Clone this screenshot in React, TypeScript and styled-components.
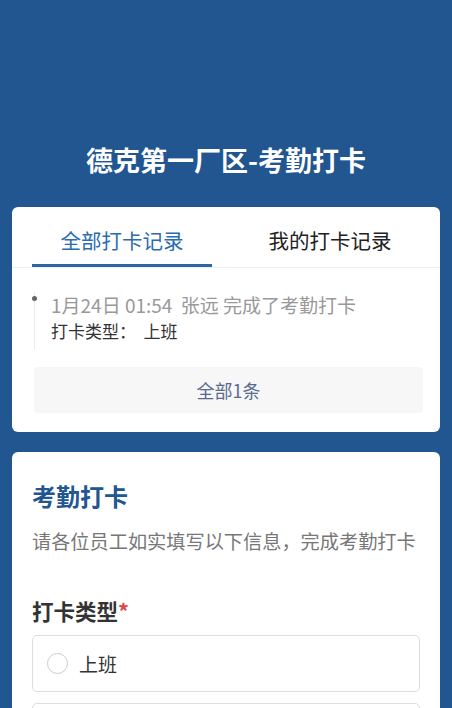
import { FC } from 'react';
import styled, { createGlobalStyle } from 'styled-components';

const GlobalStyle = createGlobalStyle`
  body {
    margin: 0;
    background: #215690;
    font-family: "Noto Sans CJK SC", "Noto Sans", sans-serif;
  }
`;

const Page = styled.div`
  min-height: 708px;
  padding: 0 12px 20px;
  box-sizing: border-box;
`;

const Title = styled.h1`
  margin: 0;
  padding-top: 138px;
  height: 207px;
  box-sizing: border-box;
  text-align: center;
  color: #fff;
  font-size: 27px;
  font-weight: 700;
  line-height: 44px;
`;

const Card = styled.div`
  background: #fff;
  border-radius: 6px;
  margin-bottom: 20px;
  overflow: hidden;
`;

const Tabs = styled.div`
  display: flex;
  justify-content: space-between;
  height: 60px;
  border-bottom: 1px solid #eee;
  padding: 0 20px;
`;

const Tab = styled.div<{ $active?: boolean }>`
  width: 180px;
  display: flex;
  align-items: center;
  justify-content: center;
  font-size: 20.5px;
  padding-top: 8px;
  box-sizing: border-box;
  color: ${({ $active }) => ($active ? '#2b6cb0' : '#222')};
  border-bottom: 3px solid ${({ $active }) => ($active ? '#2c67a4' : 'transparent')};
`;

const RecordList = styled.div`
  padding: 24px 17px 19px 22px;
`;

const Record = styled.div`
  position: relative;
  padding-left: 16px;
  border-left: 1px solid #eaeaea;
  padding-bottom: 6px;

  &::before {
    content: '';
    position: absolute;
    left: -3px;
    top: 4px;
    width: 5px;
    height: 5px;
    border-radius: 50%;
    background: #666;
  }
`;

const RecordHead = styled.div`
  color: #999;
  font-size: 19px;
  line-height: 26px;
`;

const RecordBody = styled.div`
  color: #333;
  font-size: 17px;
  line-height: 26px;
  white-space: pre;
`;

const MoreButton = styled.div`
  margin-top: 17px;
  height: 46px;
  background: #f7f7f8;
  border-radius: 4px;
  display: flex;
  align-items: center;
  justify-content: center;
  color: #5a6a8e;
  font-size: 18px;
`;

const FormBody = styled.div`
  padding: 29px 20px 20px;
`;

const FormTitle = styled.h2`
  margin: 0;
  color: #215690;
  font-size: 24px;
  font-weight: 700;
  line-height: 30px;
`;

const FormDesc = styled.p`
  margin: 16px 0 0;
  color: #777;
  font-size: 19.2px;
  line-height: 28px;
  white-space: nowrap;
`;

const FieldLabel = styled.div`
  margin-top: 42px;
  color: #333;
  font-size: 21.5px;
  font-weight: 700;
  line-height: 28px;
`;

const Star = styled.span`
  color: #e04646;
`;

const Option = styled.label`
  margin-top: 10px;
  display: flex;
  align-items: center;
  gap: 11px;
  height: 57px;
  padding: 0 14px;
  border: 1px solid #ddd;
  border-radius: 5px;
  box-sizing: border-box;
  font-size: 19px;
  color: #333;

  & + & {
    margin-top: 11px;
  }
`;

const Radio = styled.span`
  width: 21px;
  height: 21px;
  border: 1px solid #ccc;
  border-radius: 50%;
  box-sizing: border-box;
`;

const App: FC = () => (
  <Page>
    <GlobalStyle />
    <Title>德克第一厂区-考勤打卡</Title>
    <Card>
      <Tabs>
        <Tab $active>全部打卡记录</Tab>
        <Tab>我的打卡记录</Tab>
      </Tabs>
      <RecordList>
        <Record>
          <RecordHead>1月24日 01:54&nbsp;&nbsp;张远 完成了考勤打卡</RecordHead>
          <RecordBody>打卡类型：  上班</RecordBody>
        </Record>
        <MoreButton>全部1条</MoreButton>
      </RecordList>
    </Card>
    <Card>
      <FormBody>
        <FormTitle>考勤打卡</FormTitle>
        <FormDesc>请各位员工如实填写以下信息，完成考勤打卡</FormDesc>
        <FieldLabel>
          打卡类型<Star>*</Star>
        </FieldLabel>
        <Option>
          <Radio />
          上班
        </Option>
        <Option>
          <Radio />
          下班
        </Option>
      </FormBody>
    </Card>
  </Page>
);

export default App;
